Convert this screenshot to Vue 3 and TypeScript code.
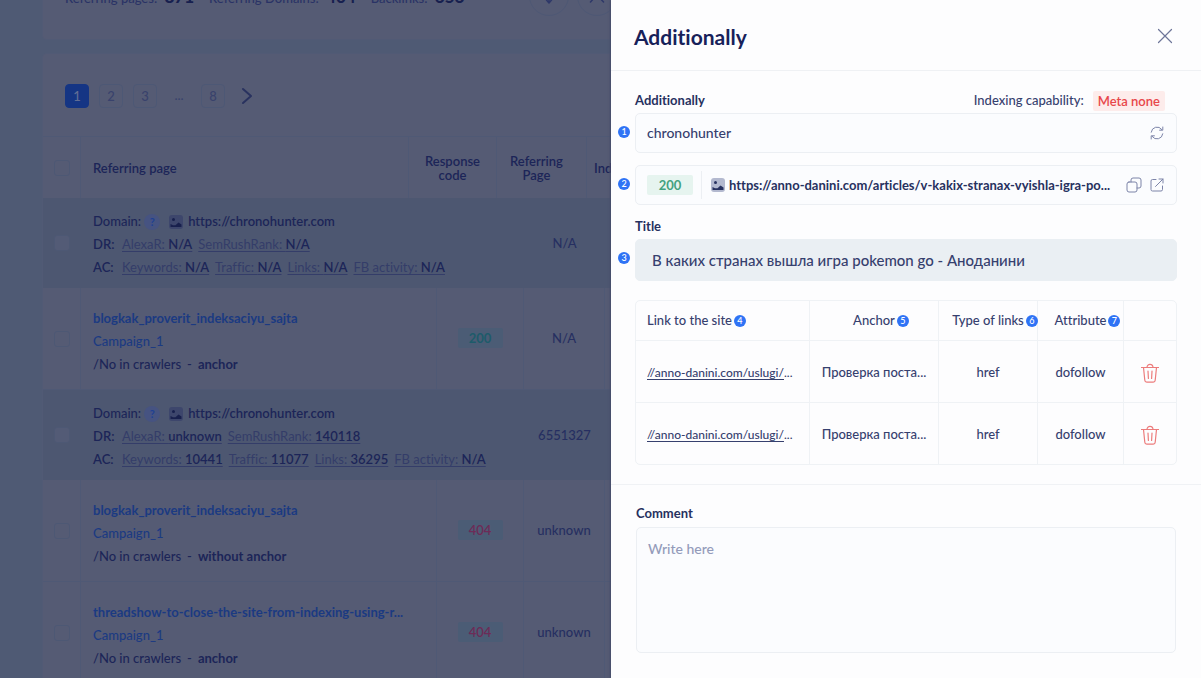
<script setup lang="ts">
import { ref } from 'vue'

interface Metric { name: string; value: string }
interface Group { kind: 'group'; id: string; domain: string; dr: Metric[]; ac: Metric[]; rank: string }
interface Item { kind: 'item'; id: string; page: string; campaign: string; anchor: string; code: number; rank: string }
interface SiteLink { id: number; url: string; anchor: string; type: string; attribute: string }

const rows: (Group | Item)[] = [
  {
    kind: 'group', id: 'g1', domain: 'https://chronohunter.com', rank: 'N/A',
    dr: [{ name: 'AlexaR', value: 'N/A' }, { name: 'SemRushRank', value: 'N/A' }],
    ac: [
      { name: 'Keywords', value: 'N/A' }, { name: 'Traffic', value: 'N/A' },
      { name: 'Links', value: 'N/A' }, { name: 'FB activity', value: 'N/A' },
    ],
  },
  { kind: 'item', id: 'i1', page: 'blogkak_proverit_indeksaciyu_sajta', campaign: 'Campaign_1', anchor: 'anchor', code: 200, rank: 'N/A' },
  {
    kind: 'group', id: 'g2', domain: 'https://chronohunter.com', rank: '6551327',
    dr: [{ name: 'AlexaR', value: 'unknown' }, { name: 'SemRushRank', value: '140118' }],
    ac: [
      { name: 'Keywords', value: '10441' }, { name: 'Traffic', value: '11077' },
      { name: 'Links', value: '36295' }, { name: 'FB activity', value: 'N/A' },
    ],
  },
  { kind: 'item', id: 'i2', page: 'blogkak_proverit_indeksaciyu_sajta', campaign: 'Campaign_1', anchor: 'without anchor', code: 404, rank: 'unknown' },
  { kind: 'item', id: 'i3', page: 'threadshow-to-close-the-site-from-indexing-using-r...', campaign: 'Campaign_1', anchor: 'anchor', code: 404, rank: 'unknown' },
]

const links = ref<SiteLink[]>([
  { id: 1, url: '//anno-danini.com/uslugi/', anchor: 'Проверка поста...', type: 'href', attribute: 'dofollow' },
  { id: 2, url: '//anno-danini.com/uslugi/', anchor: 'Проверка поста...', type: 'href', attribute: 'dofollow' },
])

const domainName = ref('chronohunter')
const pageTitle = ref('В каких странах вышла игра pokemon go - Аноданини')
const comment = ref('')

function removeLink(id: number) {
  links.value = links.value.filter((l) => l.id !== id)
}
</script>

<template>
  <div class="app">
    <main class="page">
      <section class="card summary">
        <span>Referring pages: <b>871</b></span>
        <span>Referring Domains: <b>404</b></span>
        <span>Backlinks: <b>656</b></span>
        <div class="tools">
          <button class="round" type="button" aria-label="Download">
            <svg width="16" height="16" viewBox="0 0 16 16"><path d="M8 1v13M5.500 12l2.500 3 2.500-3" /></svg>
          </button>
          <button class="round" type="button" aria-label="Expand">
            <svg width="16" height="16" viewBox="0 0 16 16"><path d="M1.500 14l4.500-5M14.500 14l-4.500-5M1.500 2l4.500 5M14.500 2l-4.500 5" /></svg>
          </button>
        </div>
      </section>

      <section class="card listing">
        <nav class="pager" aria-label="Pages">
          <button class="num active" type="button">1</button>
          <button class="num" type="button">2</button>
          <button class="num" type="button">3</button>
          <span class="dots">...</span>
          <button class="num" type="button">8</button>
          <button class="next" type="button" aria-label="Next page">
            <svg width="12" height="18" viewBox="0 0 12 18"><path d="M2 2l8 7-8 7" /></svg>
          </button>
        </nav>

        <table class="grid head">
          <colgroup><col class="c-check"><col class="h-page"><col class="h-code"><col class="h-rank"><col></colgroup>
          <thead>
            <tr>
              <th class="check"><input type="checkbox" aria-label="Select all"></th>
              <th class="left">Referring page</th>
              <th>Response<br>code</th>
              <th class="rank-head">Referring<br>Page</th>
              <th class="last">Indexing</th>
            </tr>
          </thead>
        </table>

        <table class="grid">
          <colgroup><col class="c-check"><col class="b-page"><col class="b-code"><col class="b-rank"><col></colgroup>
          <tbody>
            <tr v-for="row in rows" :key="row.id" :class="row.kind">
              <td class="check"><input type="checkbox" :aria-label="'Select ' + row.id"></td>
              <template v-if="row.kind === 'group'">
                <td class="info">
                  <div class="line">
                    <span>Domain:</span><span class="help">?</span>
                    <svg class="pic" width="14" height="14" viewBox="0 0 14 14">
                      <rect width="14" height="14" rx="3" class="pic-bg" />
                      <circle cx="4.500" cy="4.500" r="1.500" class="pic-fg" />
                      <path class="pic-fg" d="M1.500 12V9l2.500 1.200h2.500l3-2.700 3 2V12z" />
                    </svg>
                    <b class="domain">{{ row.domain }}</b>
                  </div>
                  <div class="line"><span class="key">DR:</span><a v-for="m in row.dr" :key="m.name" href="#" class="metric">{{ m.name }}: <b>{{ m.value }}</b></a></div>
                  <div class="line"><span class="key">AC:</span><a v-for="m in row.ac" :key="m.name" href="#" class="metric">{{ m.name }}: <b>{{ m.value }}</b></a></div>
                </td>
                <td></td>
              </template>
              <template v-else>
                <td class="info">
                  <div class="line"><a href="#" class="pagelink">{{ row.page }}</a></div>
                  <div class="line"><a href="#" class="campaign">{{ row.campaign }}</a></div>
                  <div class="line crawl"><span>/No in crawlers</span><span>-</span><b>{{ row.anchor }}</b></div>
                </td>
                <td><span class="code" :class="{ bad: row.code === 404 }">{{ row.code }}</span></td>
              </template>
              <td class="rank">{{ row.rank }}</td>
              <td></td>
            </tr>
          </tbody>
        </table>
      </section>
    </main>

    <aside class="drawer" role="dialog" aria-labelledby="drawer-title">
      <header class="top">
        <h1 id="drawer-title">Additionally</h1>
        <button class="icon" type="button" aria-label="Close">
          <svg width="16" height="16" viewBox="0 0 16 16"><path d="M1.500 1.500l13 13M14.500 1.500l-13 13" /></svg>
        </button>
      </header>

      <div class="body">
        <div class="labels">
          <label for="domain">Additionally</label>
          <div class="index">Indexing capability: <span class="meta">Meta none</span></div>
        </div>
        <div class="field">
          <i class="mark side">1</i>
          <input id="domain" v-model="domainName" type="text">
          <button class="icon" type="button" aria-label="Refresh">
            <svg width="14" height="14" viewBox="0 0 14 14">
              <path d="M1.200 6.200A5.900 5.900 0 0 1 11.800 3.500M12.800 1v3.200H9.600M12.800 7.800A5.900 5.900 0 0 1 2.200 10.500M1.200 13V9.800h3.200" />
            </svg>
          </button>
        </div>

        <div class="field url">
          <i class="mark side">2</i>
          <span class="code light">200</span>
          <span class="sep"></span>
          <svg class="pic" width="14" height="14" viewBox="0 0 14 14">
            <rect width="14" height="14" rx="3" fill="#b3b9cf" />
            <circle cx="4.500" cy="4.500" r="1.500" fill="#27315f" />
            <path fill="#27315f" d="M1.500 12V9l2.500 1.200h2.500l3-2.700 3 2V12z" />
          </svg>
          <a href="#" class="address">https://anno-danini.com/articles/v-kakix-stranax-vyishla-igra-po...</a>
          <button class="icon" type="button" aria-label="Copy">
            <svg width="16" height="16" viewBox="0 0 16 16">
              <rect x="1" y="5" width="10" height="10" rx="2" />
              <path d="M5 5V3a2 2 0 0 1 2-2h6a2 2 0 0 1 2 2v6a2 2 0 0 1-2 2h-2" />
            </svg>
          </button>
          <button class="icon" type="button" aria-label="Open in new tab">
            <svg width="14" height="14" viewBox="0 0 14 14">
              <path d="M6 1.500H2.500a1.500 1.500 0 0 0-1.500 1.500v8.500A1.500 1.500 0 0 0 2.500 13H11a1.500 1.500 0 0 0 1.500-1.500V8M5.500 8.500L13 1M9 1h4v4" />
            </svg>
          </button>
        </div>

        <label class="title-label" for="title">Title</label>
        <div class="field title">
          <i class="mark side">3</i>
          <input id="title" v-model="pageTitle" type="text" readonly>
        </div>

        <div class="frame">
          <table class="links">
            <colgroup><col class="l-url"><col class="l-anchor"><col class="l-type"><col class="l-attr"><col class="l-del"></colgroup>
            <thead>
              <tr>
                <th class="left"><span class="cap">Link to the site<i class="mark">4</i></span></th>
                <th><span class="cap">Anchor<i class="mark">5</i></span></th>
                <th><span class="cap">Type of links<i class="mark">6</i></span></th>
                <th><span class="cap">Attribute<i class="mark">7</i></span></th>
                <th aria-label="Actions"></th>
              </tr>
            </thead>
            <tbody>
              <tr v-for="l in links" :key="l.id">
                <td class="left site"><a href="#">{{ l.url }}</a>...</td>
                <td>{{ l.anchor }}</td>
                <td>{{ l.type }}</td>
                <td>{{ l.attribute }}</td>
                <td>
                  <button class="trash" type="button" aria-label="Delete link" @click="removeLink(l.id)">
                    <svg width="18" height="20" viewBox="0 0 18 20">
                      <path d="M.5 4.500h17M6 4.500C6 .2 12 .2 12 4.500M2.500 4.500l1.300 12.800a2 2 0 0 0 2 1.900h6.400a2 2 0 0 0 2-1.900L15.500 4.500M7 8l.4 7.500M11 8l-.4 7.500" />
                    </svg>
                  </button>
                </td>
              </tr>
            </tbody>
          </table>
        </div>
      </div>

      <div class="comment">
        <label for="comment">Comment</label>
        <textarea id="comment" v-model="comment" placeholder="Write here"></textarea>
      </div>
    </aside>
  </div>
</template>

<style>
body { margin: 0; }
</style>

<style scoped>
.app {
  position: relative;
  height: 100vh;
  overflow: hidden;
  background: #4f5a74;
  color: #1c2558;
  font: 500 13px/23px Lato, "Liberation Sans", sans-serif;
  font-variant-ligatures: none;
}
* { box-sizing: border-box; }
button { padding: 0; border: 0; background: none; font: inherit; color: inherit; cursor: pointer; }
svg { display: block; fill: none; stroke: currentColor; stroke-linecap: round; stroke-linejoin: round; }
b { font-weight: 700; }
a { color: inherit; }

/* dimmed page */
.page { display: flex; flex-direction: column; gap: 13px; margin: -49px 24px 0 42px; }
.card { background: #555b74; border: 1px solid #515a75; border-radius: 4px; }
.summary { display: flex; align-items: center; gap: 15px; height: 89px; padding: 0 22px; color: #2a3366; white-space: nowrap; }
.summary span { padding-top: 4px; }
.summary b { margin-left: 4px; font-size: 17px; font-weight: 900; color: #17204f; }
.tools { display: flex; gap: 8px; margin-left: 50px; }
.round { display: grid; place-items: center; width: 40px; height: 40px; border: 1px solid #4e5874; border-radius: 50%; color: #2e3869; }
.round svg { stroke-width: 1.500px; }

.pager { display: flex; align-items: center; gap: 10px; height: 82px; padding: 2px 22px 0; color: #39426c; }
.num, .dots { width: 24px; height: 24px; text-align: center; line-height: 22px; }
.num { border: 1px solid #4d5875; border-radius: 4px; }
.num.active { background: #153584; border-color: #153584; color: #626d94; }
.next { margin-left: 6px; color: #29325f; }
.next svg { stroke-width: 2px; }

.grid { width: 100%; table-layout: fixed; border-spacing: 0; }
.grid th, .grid td { padding: 0; text-align: center; border-right: 1px solid #4f5975; }
.c-check { width: 38px; }
.h-page { width: 328px; }
.h-code { width: 88px; }
.h-rank { width: 90px; }
.b-page { width: 356px; }
.b-code { width: 87px; }
.b-rank { width: 81px; }
.head th { height: 62px; border-top: 1px solid #4f5975; line-height: 14px; font-weight: 600; }
.grid .left, .grid .info { padding-left: 12px; text-align: left; }
.head .rank-head { padding-right: 10px; }
.head .last { padding-left: 7px; text-align: left; }
.check input { display: block; appearance: none; width: 16px; height: 16px; margin: 0 auto; border: 1px solid #4d5874; border-radius: 3px; }
.group { background: #4d5771; }
.group td { height: 90px; border-right: 0; }
.group .info { padding-top: 3px; }
.group .check input { background: #535b76; }
.item td { height: 102px; border-bottom: 1px solid #4f5975; }
.item .info { padding-top: 5px; }
.line { display: flex; align-items: center; height: 23px; white-space: nowrap; }
.help { width: 16px; height: 16px; margin: 0 9px 0 3px; border-radius: 50%; background: #465381; color: #1f4193; text-align: center; font-size: 11px; line-height: 16px; font-weight: 700; }
.pic { stroke: none; margin-right: 5px; flex: none; }
.pic-bg { fill: #3d466c; }
.pic-fg { fill: #18204d; }
.key { flex: none; width: 29px; font-weight: 600; }
.metric { margin-right: 6px; color: #343d69; font-weight: 400; text-decoration: underline; text-underline-offset: 2px; }
.metric b { color: #1c2558; font-weight: 600; }
.domain { font-weight: 600; }
.pagelink { color: #1b3a82; font-weight: 700; text-decoration: none; }
.campaign { color: #1b3a82; text-decoration: none; }
.crawl { gap: 6px; }
.code { display: inline-block; width: 45px; height: 20px; background: #4b5c75; border-radius: 2px; color: #1d5b6a; font-weight: 700; line-height: 20px; text-align: center; }
.code.bad { color: #6d2b57; font-weight: 600; }
.rank { color: #262f61; }

/* drawer */
.drawer {
  position: absolute;
  top: 0;
  right: 0;
  bottom: 0;
  width: 590px;
  max-width: 100%;
  background: #fdfdfe;
  color: #36406e;
  overflow: hidden;
  box-shadow: -1px 0 2px #444c69;
}
.top { display: flex; align-items: center; justify-content: space-between; height: 71px; padding: 4px 28px 0 23px; border-bottom: 1px solid #eff1f4; }
h1 { margin: 0; color: #17215a; font-size: 21px; line-height: 28px; font-weight: 700; }
.icon { flex: none; color: #7c84a8; }
.icon svg { stroke-width: 1px; }
.top .icon { color: #6d7599; padding-bottom: 2px; }
.top .icon svg { stroke-width: 1.200px; }
.body { padding: 17px 24px 0; }
label { color: #27315f; font-weight: 700; }
.labels { display: flex; justify-content: space-between; align-items: center; height: 25px; }
.index { display: flex; gap: 9px; align-items: center; padding-right: 12px; }
.meta { padding: 0 5px; background: #fdeceb; border-radius: 2px; color: #e8474a; font-weight: 600; line-height: 20px; }
.field { position: relative; display: flex; align-items: center; height: 40px; padding: 0 12px 0 11px; border: 1px solid #eceff3; border-radius: 5px; background: #fbfcfe; }
.field input { flex: 1; min-width: 0; padding: 0; border: 0; background: none; outline: 0; color: inherit; font: 500 14px/20px Lato, "Liberation Sans", sans-serif; font-variant-ligatures: none; }
.url { margin-top: 12px; }
.light { background: #e6f4ef; color: #43a27f; width: 46px; flex: none; }
.sep { width: 1px; height: 28px; margin: 0 9px 0 8px; background: #eceff3; }
.url .pic { margin-right: 4px; }
.address { flex: 1; min-width: 0; overflow: hidden; color: #27315f; font-weight: 700; text-decoration: none; white-space: nowrap; }
.url .icon { margin-left: 8px; }
.title-label { display: block; margin-top: 10px; height: 24px; }
.field.title { height: 42px; padding-left: 16px; border-color: #eaeff3; background: #eaeff3; }
.field.title input { font-size: 15px; }
.mark { display: grid; place-items: center; width: 12px; height: 12px; border-radius: 50%; background: #2f73f5; color: #fff; font: 500 9px/12px Lato, sans-serif; }
.side { position: absolute; left: -18px; top: 12px; }

.frame { margin-top: 19px; border: 1px solid #eff2f5; border-radius: 5px; overflow: hidden; }
.links { width: 100%; table-layout: fixed; border-spacing: 0; }
.links th, .links td { padding: 0; border-right: 1px solid #eff2f5; border-bottom: 1px solid #eff2f5; text-align: center; font-weight: 500; white-space: nowrap; }
.links th { height: 40px; }
.links td { height: 62px; padding-top: 2px; }
.links th:last-child, .links td:last-child { border-right: 0; }
.links tbody tr:last-child td { height: 61px; border-bottom: 0; }
.links .left { padding-left: 11px; text-align: left; }
.links .site { font-size: 12px; }
.links a { text-underline-offset: 2px; }
.l-url { width: 174px; }
.l-anchor { width: 129px; }
.l-type { width: 99px; }
.l-attr { width: 86px; }
.cap { position: relative; display: inline-block; }
.cap .mark { position: absolute; left: 100%; top: 6px; margin-left: 2px; }
.trash { display: block; margin: 0 auto; color: #ec7c7c; }
.trash svg { stroke-width: 1.200px; }

.comment { margin-top: 19px; padding: 17px 25px 24px; border-top: 1px solid #f0f2f5; }
.comment label { display: block; height: 25px; }
textarea { display: block; width: 100%; height: 126px; padding: 11px; border: 1px solid #eceff3; border-radius: 5px; background: #fbfcfe; color: inherit; font: 500 14px/20px Lato, "Liberation Sans", sans-serif; font-variant-ligatures: none; resize: none; outline: 0; }
textarea::placeholder { color: #939bba; opacity: 1; }
</style>
